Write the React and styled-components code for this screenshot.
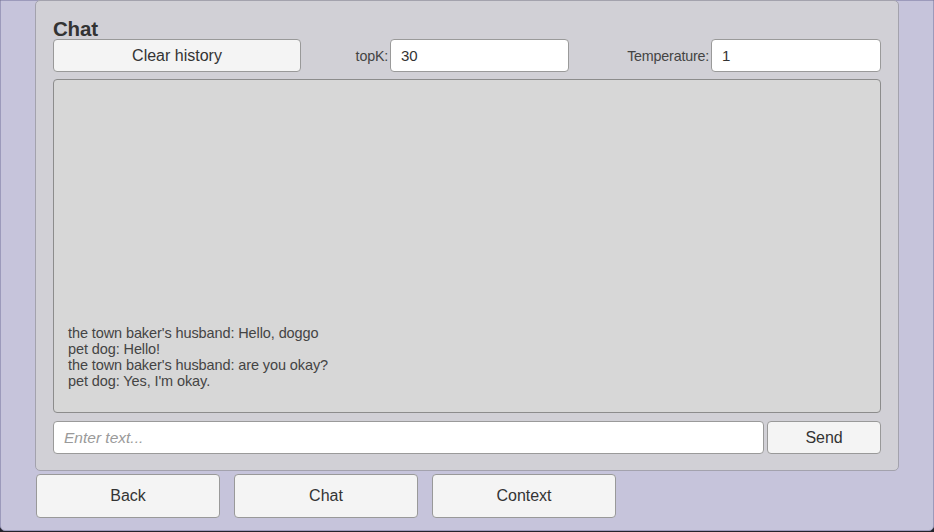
import React from 'react';
import styled, { createGlobalStyle } from 'styled-components';

const GlobalStyle = createGlobalStyle`
html, body {
    margin: 0;
    padding: 0;
    background: #23232c;
    font-family: "Liberation Sans", Arial, sans-serif;
}
`

const messages = [
    "the town baker's husband: Hello, doggo",
    'pet dog: Hello!',
    "the town baker's husband: are you okay?",
    "pet dog: Yes, I'm okay.",
];

export default function App() {
    return (
        <>
            <GlobalStyle />
            <Frame>
                <Panel>
                    <Title>Chat</Title>
                    <TopRow>
                        <Button $width='248px' $height='33px'>Clear history</Button>
                        <Field $width='268px'>
                            <Label>topK:</Label>
                            <TextInput $width='179px' defaultValue='30' />
                        </Field>
                        <Field $width='312px'>
                            <Label>Temperature:</Label>
                            <TextInput $width='170px' defaultValue='1' />
                        </Field>
                    </TopRow>
                    <ChatLog>
                        {messages.map((m, i) => <Line key={i}>{m}</Line>)}
                    </ChatLog>
                    <InputRow>
                        <TextInput $width='712px' placeholder='Enter text...' />
                        <Button $width='114px' $height='33px'>Send</Button>
                    </InputRow>
                </Panel>
                <NavRow>
                    <NavButton>Back</NavButton>
                    <NavButton>Chat</NavButton>
                    <NavButton>Context</NavButton>
                </NavRow>
            </Frame>
        </>
    )
};

const Frame = styled.div`
box-sizing: border-box;
width: 934px;
height: 531px;
background: #c6c4db;
border: 1px solid #9c9abb;
border-radius: 0 0 5px 5px;
padding-left: 34px;
display: flex;
flex-direction: column;
`

const Panel = styled.div`
box-sizing: border-box;
width: 864px;
height: 471px;
margin-top: -1px;
background: #d1d0d6;
border: 1px solid #a3a2ad;
border-radius: 5px;
padding: 17px 17px 0 17px;
display: flex;
flex-direction: column;
`

const Title = styled.div`
font-size: 20.5px;
font-weight: bold;
color: #333;
line-height: 21px;
height: 21px;
letter-spacing: -0.2px;
`

const TopRow = styled.div`
display: flex;
align-items: center;
height: 33px;
`

const Field = styled.div`
display: flex;
justify-content: flex-end;
align-items: center;
gap: 2px;
width: ${p => p.$width};
`

const Label = styled.span`
font-size: 14.3px;
color: #444;
letter-spacing: -0.2px;
`

const TextInput = styled.input`
box-sizing: border-box;
width: ${p => p.$width};
height: 33px;
background: #fff;
border: 1px solid #9a9a9a;
border-radius: 4px;
padding: 0 10px;
font-family: "Liberation Sans", Arial, sans-serif;
font-size: 15px;
color: #333;
outline: none;
&::placeholder {
    color: #9a9a9a;
    font-style: italic;
    font-size: 15.5px;
}
`

const Button = styled.button`
box-sizing: border-box;
width: ${p => p.$width};
height: ${p => p.$height};
background: #f4f4f4;
border: 1px solid #999;
border-radius: 4px;
font-family: "Liberation Sans", Arial, sans-serif;
font-size: 16px;
color: #333;
padding: 0;
`

const ChatLog = styled.div`
box-sizing: border-box;
margin-top: 7px;
height: 334px;
background: #d7d7d7;
border: 1px solid #8c8c8c;
border-radius: 4px;
padding: 0 15px 23px 14px;
display: flex;
flex-direction: column;
justify-content: flex-end;
`

const Line = styled.div`
font-size: 14.5px;
line-height: 16px;
color: #444;
letter-spacing: -0.1px;
`

const InputRow = styled.div`
display: flex;
gap: 3px;
margin-top: 8px;
`

const NavRow = styled.div`
display: flex;
gap: 14px;
margin-top: 3px;
margin-left: 1px;
`

const NavButton = styled.button`
box-sizing: border-box;
width: 184px;
height: 44px;
background: #f4f4f4;
border: 1px solid #999;
border-radius: 4px;
font-family: "Liberation Sans", Arial, sans-serif;
font-size: 16px;
color: #333;
padding: 0;
`
